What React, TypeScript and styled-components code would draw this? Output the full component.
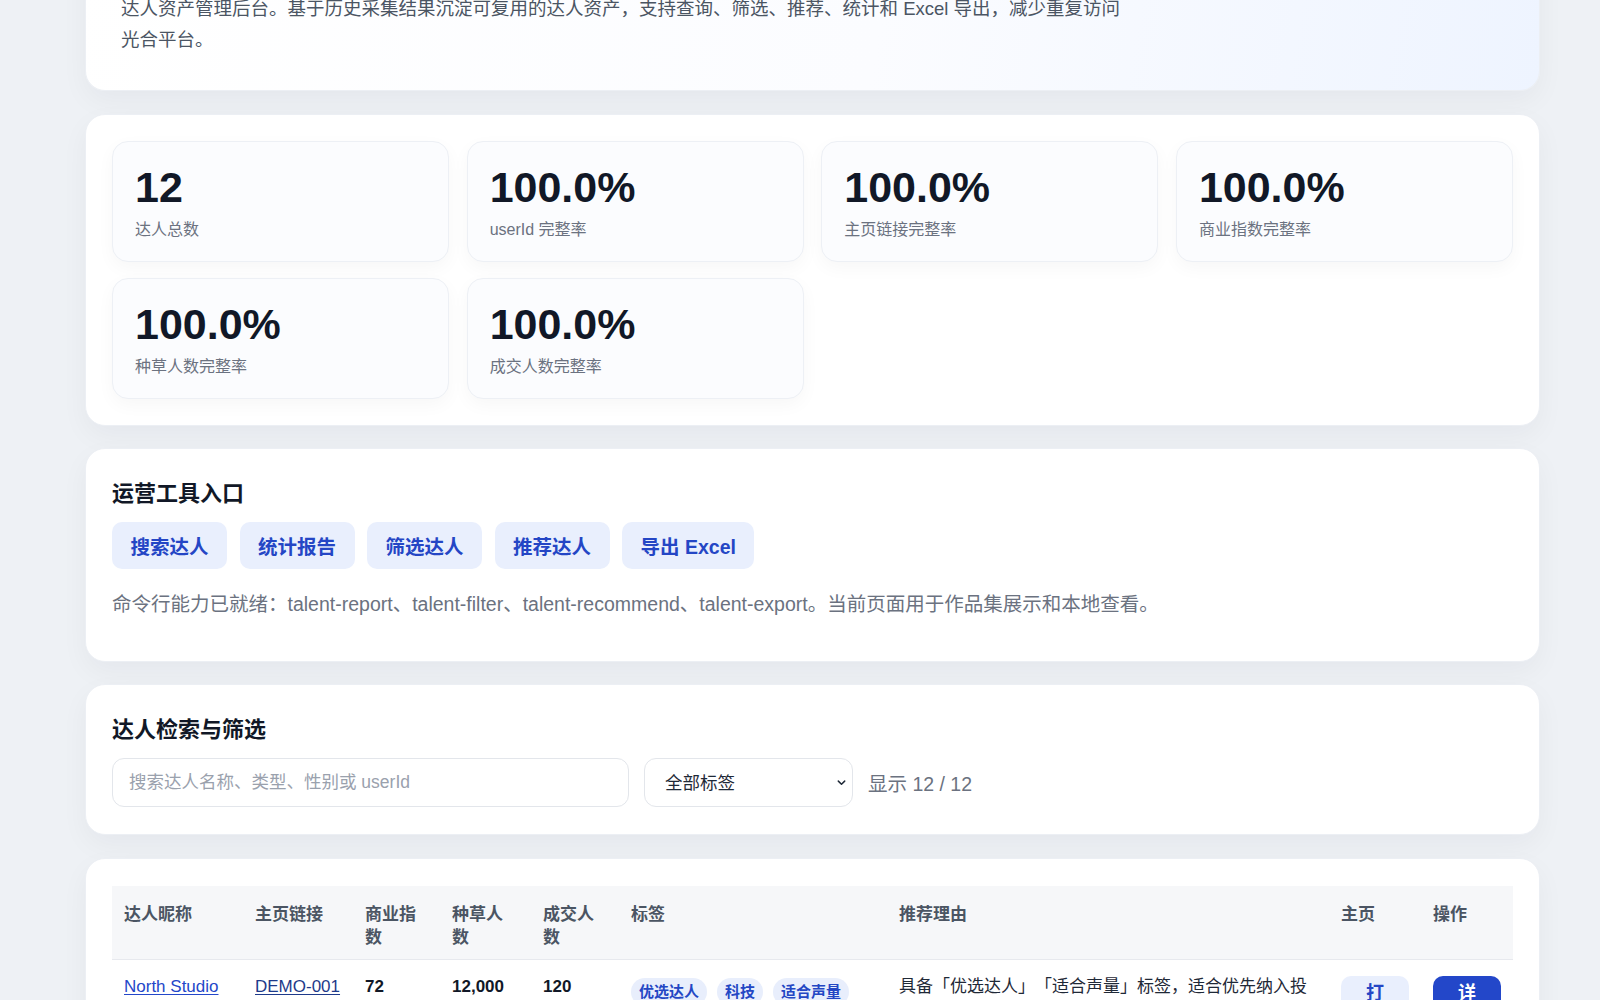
import React, { useLayoutEffect, useRef, useState } from "react";
import styled, { createGlobalStyle } from "styled-components";

const GlobalStyle = createGlobalStyle`
  html { scrollbar-width: none; scroll-behavior: auto; }
  html::-webkit-scrollbar { display: none; }
  body {
    margin: 0;
    background: #eef1f5;
    font-family: "Liberation Sans", "Noto Sans CJK SC", sans-serif;
    color: #111827;
    text-spacing-trim: space-all;
  }
  * { box-sizing: border-box; }
`;

const Page = styled.main`
  display: flex;
  flex-direction: column;
  gap: 22.5px;
  padding: 28px 60px 48px 85px;
`;

const Card = styled.section`
  background: #ffffff;
  border: 1px solid #eceff4;
  border-radius: 20px;
  padding: 26px;
  box-shadow: 0 10px 28px rgba(15, 23, 42, 0.045);
`;

const TitledCard = styled(Card)<{ $bottom?: number }>`
  padding-top: 29px;
  padding-bottom: ${(p) => p.$bottom ?? 26}px;
`;

const Hero = styled(Card)`
  padding: 35px;
  background: linear-gradient(100deg, #ffffff 0%, #fbfcff 55%, #eef4ff 100%);
`;

const Eyebrow = styled.div`
  font-size: 15px;
  font-weight: 700;
  letter-spacing: 0.12em;
  color: #2447c4;
  margin-bottom: 12px;
`;

const HeroTitle = styled.h1`
  margin: 0 0 14px;
  font-size: 40px;
  line-height: 1.2;
  color: #0f172a;
`;

const HeroText = styled.p`
  margin: 0;
  max-width: 1010px;
  font-size: 18.5px;
  line-height: 1.65;
  color: #4b5563;
`;

const StatGrid = styled.div`
  display: grid;
  grid-template-columns: repeat(4, 1fr);
  column-gap: 17.5px;
  row-gap: 16px;
`;

const StatBox = styled.div`
  background: #fbfcfe;
  border: 1px solid #edf0f5;
  border-radius: 16px;
  padding: 22px 22px 19px;
  box-shadow: 0 6px 18px rgba(15, 23, 42, 0.035);
`;

const StatValue = styled.div`
  font-size: 43px;
  font-weight: 700;
  line-height: 46px;
  color: #111827;
`;

const StatLabel = styled.div`
  margin-top: 8px;
  font-size: 16px;
  line-height: 24px;
  color: #6b7280;
`;

const SectionTitle = styled.h2`
  margin: 0 0 13px;
  font-size: 22px;
  line-height: 31px;
  font-weight: 700;
  color: #111827;
`;

const ToolRow = styled.div`
  display: flex;
  gap: 12.5px;
`;

const ToolButton = styled.button`
  height: 47px;
  padding: 0 18.5px;
  border: none;
  border-radius: 10px;
  background: #e9effd;
  color: #2446c5;
  font-family: inherit;
  font-size: 19.5px;
  font-weight: 700;
  cursor: pointer;
`;

const Note = styled.p`
  margin: 21px 0 16px;
  font-size: 19.5px;
  line-height: 28.8px;
  color: #6b7280;
`;

const FilterRow = styled.div`
  display: flex;
  align-items: center;
  gap: 15px;
`;

const SearchInput = styled.input`
  width: 517px;
  height: 49px;
  padding: 0 16px;
  border: 1px solid #e3e6eb;
  border-radius: 12px;
  font-family: inherit;
  font-size: 17.5px;
  color: #111827;
  background: #ffffff;
  outline: none;
  &::placeholder { color: #9aa1ad; }
`;

const SelectWrap = styled.div`
  position: relative;
  width: 209px;
`;

const Select = styled.select`
  appearance: none;
  width: 100%;
  height: 49px;
  padding: 0 36px 0 20px;
  border: 1px solid #e3e6eb;
  border-radius: 12px;
  background: #ffffff;
  font-family: inherit;
  font-size: 17.5px;
  color: #1f2937;
  outline: none;
`;

const Chevron = styled.svg`
  position: absolute;
  right: 6px;
  top: 19px;
  width: 11px;
  height: 11px;
  pointer-events: none;
`;

const CountText = styled.span`
  font-size: 19.5px;
  color: #6b7280;
`;

const TableCard = styled(Card)`
  padding-top: 27px;
`;

const Table = styled.table`
  width: 100%;
  border-collapse: collapse;
  table-layout: fixed;
  font-size: 17px;
`;

const Th = styled.th`
  padding: 17px 12px 10px;
  background: #f6f7f9;
  border-bottom: 1px solid #e7e9ee;
  text-align: left;
  vertical-align: top;
  line-height: 23px;
  font-weight: 700;
  color: #4b5563;
`;

const Td = styled.td`
  padding: 16px 12px;
  vertical-align: top;
  line-height: 1.35;
  color: #1f2937;
  border-bottom: 1px solid #eef0f4;
`;

const NumCell = styled(Td)`
  font-weight: 700;
  color: #111827;
`;

const NameLink = styled.a<{ $dark?: boolean }>`
  color: ${(p) => (p.$dark ? "#1e3a8a" : "#2447c9")};
  text-decoration: underline;
  text-underline-offset: 2px;
`;

const TagList = styled.div`
  display: flex;
  flex-wrap: wrap;
  gap: 10px;
`;

const Tag = styled.span`
  display: inline-flex;
  align-items: center;
  height: 28px;
  margin-top: 2px;
  padding: 0 8px;
  border-radius: 14px;
  background: #e8eefc;
  color: #2447c4;
  font-size: 15px;
  font-weight: 700;
`;

const RowButton = styled.button<{ $primary?: boolean }>`
  display: block;
  width: 100%;
  padding: 5px 18px;
  border: none;
  border-radius: 10px;
  background: ${(p) => (p.$primary ? "#2347c9" : "#e9effd")};
  color: ${(p) => (p.$primary ? "#ffffff" : "#2446c5")};
  font-family: inherit;
  font-size: 18px;
  line-height: 1.35;
  font-weight: 700;
  cursor: pointer;
`;

const stats = [
  { value: "12", label: "达人总数" },
  { value: "100.0%", label: "userId 完整率" },
  { value: "100.0%", label: "主页链接完整率" },
  { value: "100.0%", label: "商业指数完整率" },
  { value: "100.0%", label: "种草人数完整率" },
  { value: "100.0%", label: "成交人数完整率" },
];

const tools = ["搜索达人", "统计报告", "筛选达人", "推荐达人", "导出 Excel"];

type Talent = {
  name: string;
  id: string;
  score: number;
  grass: string;
  deals: number;
  tags: string[];
  reason: string;
};

const talents: Talent[] = [
  { name: "North Studio", id: "DEMO-001", score: 72, grass: "12,000", deals: 120, tags: ["优选达人", "科技", "适合声量"], reason: "具备「优选达人」「适合声量」标签，适合优先纳入投放候选池，商业指数表现稳定。" },
  { name: "Lumi Daily", id: "DEMO-002", score: 68, grass: "9,800", deals: 96, tags: ["美妆", "适合转化"], reason: "具备「适合转化」标签，成交人数表现较好，适合带货类合作。" },
  { name: "Urban Run", id: "DEMO-003", score: 81, grass: "15,200", deals: 143, tags: ["优选达人", "运动"], reason: "具备「优选达人」标签，商业指数较高，适合品牌长期合作。" },
  { name: "Kitchen Lab", id: "DEMO-004", score: 64, grass: "7,400", deals: 88, tags: ["美食", "适合声量"], reason: "具备「适合声量」标签，种草人数增长稳定，适合新品曝光。" },
  { name: "Pixel Home", id: "DEMO-005", score: 59, grass: "6,100", deals: 70, tags: ["家居"], reason: "内容垂直度高，适合家居类品牌的场景化种草。" },
  { name: "Trip Notes", id: "DEMO-006", score: 75, grass: "11,300", deals: 105, tags: ["旅行", "适合声量"], reason: "具备「适合声量」标签，适合目的地与出行类品牌投放。" },
];

export default function App() {
  const statsRef = useRef<HTMLElement>(null);
  const [query, setQuery] = useState("");

  useLayoutEffect(() => {
    const el = statsRef.current;
    if (!el) return;
    const top = el.getBoundingClientRect().top + window.scrollY;
    window.scrollTo(0, top - 114);
  }, []);

  return (
    <>
      <GlobalStyle />
      <Page>
        <Hero>
          <Eyebrow>TALENT ASSET HUB</Eyebrow>
          <HeroTitle>达人资产库</HeroTitle>
          <HeroText>
            达人资产管理后台。基于历史采集结果沉淀可复用的达人资产，支持查询、筛选、推荐、统计和 Excel 导出，减少重复访问光合平台。
          </HeroText>
        </Hero>

        <Card ref={statsRef}>
          <StatGrid>
            {stats.map((s) => (
              <StatBox key={s.label}>
                <StatValue>{s.value}</StatValue>
                <StatLabel>{s.label}</StatLabel>
              </StatBox>
            ))}
          </StatGrid>
        </Card>

        <TitledCard>
          <SectionTitle>运营工具入口</SectionTitle>
          <ToolRow>
            {tools.map((t) => (
              <ToolButton key={t}>{t}</ToolButton>
            ))}
          </ToolRow>
          <Note>
            命令行能力已就绪：talent-report、talent-filter、talent-recommend、talent-export。当前页面用于作品集展示和本地查看。
          </Note>
        </TitledCard>

        <TitledCard $bottom={27}>
          <SectionTitle>达人检索与筛选</SectionTitle>
          <FilterRow>
            <SearchInput
              value={query}
              onChange={(e) => setQuery(e.target.value)}
              placeholder="搜索达人名称、类型、性别或 userId"
            />
            <SelectWrap>
              <Select defaultValue="all">
                <option value="all">全部标签</option>
                <option value="pick">优选达人</option>
                <option value="voice">适合声量</option>
              </Select>
              <Chevron viewBox="0 0 12 12" fill="none">
                <path d="M2.5 4.5 6 8l3.5-3.5" stroke="#1f2937" strokeWidth="1.6" strokeLinecap="round" strokeLinejoin="round" />
              </Chevron>
            </SelectWrap>
            <CountText>显示 12 / 12</CountText>
          </FilterRow>
        </TitledCard>

        <TableCard>
          <Table>
            <colgroup>
              <col style={{ width: 131 }} />
              <col style={{ width: 110 }} />
              <col style={{ width: 87 }} />
              <col style={{ width: 91 }} />
              <col style={{ width: 88 }} />
              <col style={{ width: 268 }} />
              <col style={{ width: 442 }} />
              <col style={{ width: 92 }} />
              <col style={{ width: 92 }} />
            </colgroup>
            <thead>
              <tr>
                <Th>达人昵称</Th>
                <Th>主页链接</Th>
                <Th>商业指数</Th>
                <Th>种草人数</Th>
                <Th>成交人数</Th>
                <Th>标签</Th>
                <Th>推荐理由</Th>
                <Th>主页</Th>
                <Th>操作</Th>
              </tr>
            </thead>
            <tbody>
              {talents.map((t) => (
                <tr key={t.id}>
                  <Td><NameLink href="#">{t.name}</NameLink></Td>
                  <Td><NameLink href="#" $dark>{t.id}</NameLink></Td>
                  <NumCell>{t.score}</NumCell>
                  <NumCell>{t.grass}</NumCell>
                  <NumCell>{t.deals}</NumCell>
                  <Td>
                    <TagList>
                      {t.tags.map((g) => (
                        <Tag key={g}>{g}</Tag>
                      ))}
                    </TagList>
                  </Td>
                  <Td>{t.reason}</Td>
                  <Td><RowButton>打开</RowButton></Td>
                  <Td><RowButton $primary>详情</RowButton></Td>
                </tr>
              ))}
            </tbody>
          </Table>
        </TableCard>
      </Page>
    </>
  );
}
